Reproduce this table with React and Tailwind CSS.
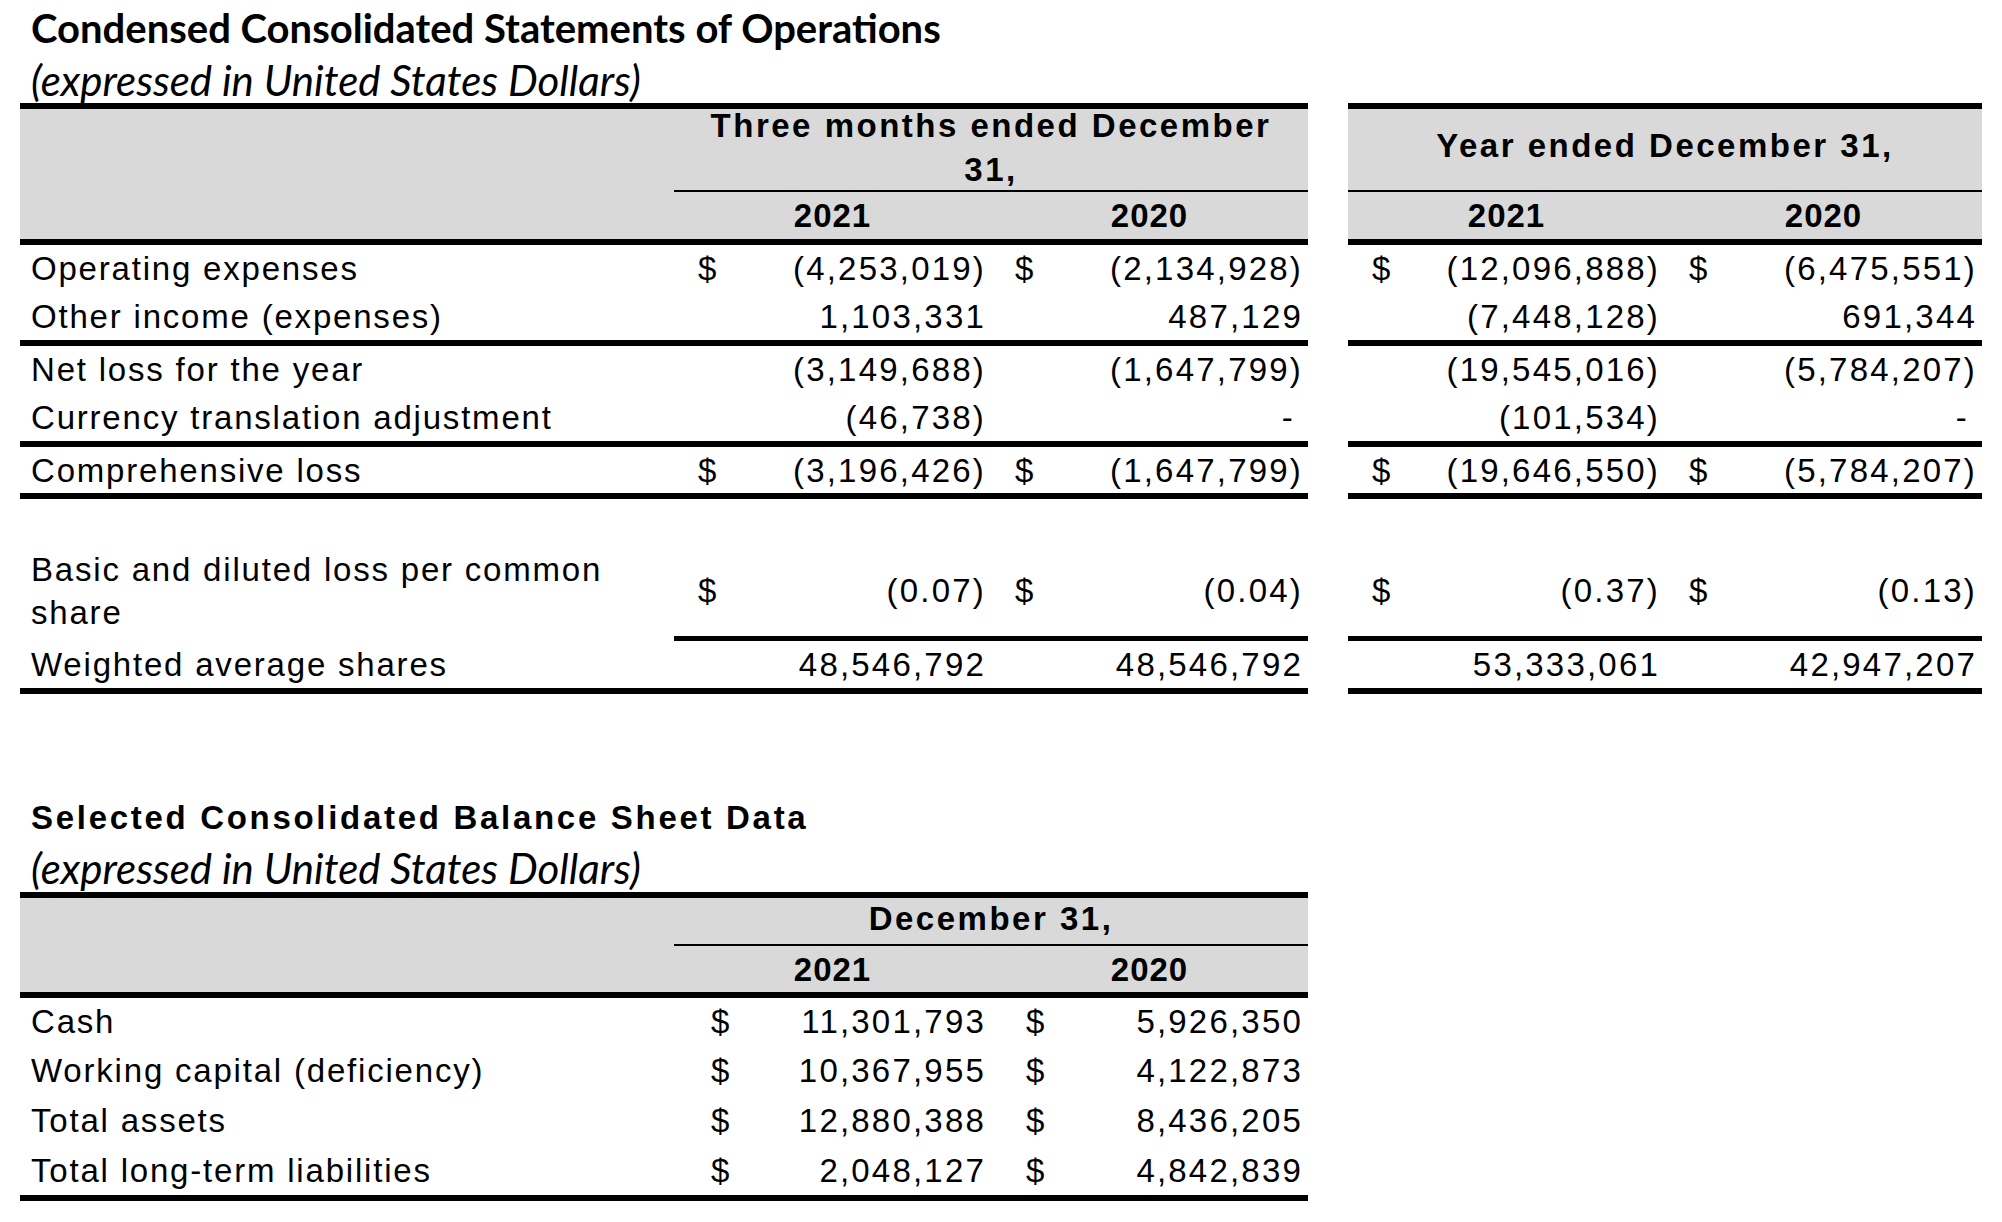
import React from "react";

const ARIAL = "font-['Liberation_Sans',Arial,sans-serif]";
const CAL = "font-['Lato','Liberation_Sans',sans-serif]";

function Line({ h = "h-[6px]" }) {
  return <div className={`${h} bg-black`} />;
}

function Money({ d, v, dash, pl = "pl-[24px]" }) {
  return (
    <div className={`flex items-center justify-between ${pl} ${dash ? "pr-[13px]" : "pr-[5px]"}`}>
      <span>{d ? "$" : ""}</span>
      <span className="tracking-[2.2px]">{v}</span>
    </div>
  );
}

function LeftRow({ h, label, a, b }) {
  return (
    <div className={`grid grid-cols-[654px_317px_317px] items-center ${h}`}>
      <div className="pl-[11px]">{label}</div>
      <Money {...a} />
      <Money {...b} />
    </div>
  );
}

function RightRow({ h, a, b }) {
  return (
    <div className={`grid grid-cols-[317px_317px] items-center ${h}`}>
      <Money {...a} />
      <Money {...b} />
    </div>
  );
}

const ops = [
  { h: "h-[47px]", label: "Operating expenses", a: { d: 1, v: "(4,253,019)" }, b: { d: 1, v: "(2,134,928)" }, c: { d: 1, v: "(12,096,888)" }, e: { d: 1, v: "(6,475,551)" } },
  { h: "h-[48px]", label: "Other income (expenses)", a: { v: "1,103,331" }, b: { v: "487,129" }, c: { v: "(7,448,128)" }, e: { v: "691,344" } },
  "line",
  { h: "h-[47px]", label: "Net loss for the year", a: { v: "(3,149,688)" }, b: { v: "(1,647,799)" }, c: { v: "(19,545,016)" }, e: { v: "(5,784,207)" } },
  { h: "h-[48px]", label: "Currency translation adjustment", a: { v: "(46,738)" }, b: { v: "-", dash: 1 }, c: { v: "(101,534)" }, e: { v: "-", dash: 1 } },
  "line",
  { h: "h-[46px]", label: "Comprehensive loss", a: { d: 1, v: "(3,196,426)" }, b: { d: 1, v: "(1,647,799)" }, c: { d: 1, v: "(19,646,550)" }, e: { d: 1, v: "(5,784,207)" } },
  "line",
];

function LeftTable() {
  return (
    <div className="w-[1288px] shrink-0">
      <Line />
      <div className="bg-[#d9d9d9] h-[130px] flex flex-col">
        <div className="flex h-[81px]">
          <div className="w-[654px]" />
          <div className="w-[634px] flex items-center justify-center text-center font-bold tracking-[2.5px] leading-[44px] -mt-[4px]">
            <div>
              Three months ended December
              <br />
              31,
            </div>
          </div>
        </div>
        <div className="flex">
          <div className="w-[654px]" />
          <div className="w-[634px] h-[2px] bg-black" />
        </div>
        <div className="grid grid-cols-[654px_317px_317px] h-[47px] items-center font-bold tracking-[1px]">
          <div />
          <div className="text-center">2021</div>
          <div className="text-center">2020</div>
        </div>
      </div>
      <Line />
      {ops.map((r, i) =>
        r === "line" ? <Line key={i} /> : <LeftRow key={i} h={r.h} label={r.label} a={r.a} b={r.b} />
      )}
      <div className="h-[46px]" />
      <div className="grid grid-cols-[654px_317px_317px] items-center h-[91px]">
        <div className="pl-[11px] leading-[43px]">
          Basic and diluted loss per common
          <br />
          share
        </div>
        <Money d={1} v="(0.07)" />
        <Money d={1} v="(0.04)" />
      </div>
      <div className="flex">
        <div className="w-[654px]" />
        <div className="w-[634px] h-[5px] bg-black" />
      </div>
      <LeftRow h="h-[47px]" label="Weighted average shares" a={{ v: "48,546,792" }} b={{ v: "48,546,792" }} />
      <Line />
    </div>
  );
}

function RightTable() {
  return (
    <div className="w-[634px] shrink-0">
      <Line />
      <div className="bg-[#d9d9d9] h-[130px] flex flex-col">
        <div className="h-[81px] flex items-center justify-center font-bold tracking-[2.5px] pb-[9px]">
          Year ended December 31,
        </div>
        <div className="h-[2px] bg-black" />
        <div className="grid grid-cols-[317px_317px] h-[47px] items-center font-bold tracking-[1px]">
          <div className="text-center">2021</div>
          <div className="text-center">2020</div>
        </div>
      </div>
      <Line />
      {ops.map((r, i) =>
        r === "line" ? <Line key={i} /> : <RightRow key={i} h={r.h} a={r.c} b={r.e} />
      )}
      <div className="h-[46px]" />
      <div className="grid grid-cols-[317px_317px] items-center h-[91px]">
        <Money d={1} v="(0.37)" />
        <Money d={1} v="(0.13)" />
      </div>
      <div className="h-[5px] bg-black" />
      <RightRow h="h-[47px]" a={{ v: "53,333,061" }} b={{ v: "42,947,207" }} />
      <Line />
    </div>
  );
}

const bal = [
  { h: "h-[47px]", label: "Cash", a: "11,301,793", b: "5,926,350" },
  { h: "h-[50px]", label: "Working capital (deficiency)", a: "10,367,955", b: "4,122,873" },
  { h: "h-[50px]", label: "Total assets", a: "12,880,388", b: "8,436,205" },
  { h: "h-[50px]", label: "Total long-term liabilities", a: "2,048,127", b: "4,842,839" },
];

function BalanceTable() {
  return (
    <div className="w-[1288px]">
      <Line />
      <div className="bg-[#d9d9d9] flex flex-col">
        <div className="flex h-[46px]">
          <div className="w-[654px]" />
          <div className="w-[634px] flex items-center justify-center font-bold tracking-[2.5px] pb-[6px]">
            December 31,
          </div>
        </div>
        <div className="flex">
          <div className="w-[654px]" />
          <div className="w-[634px] h-[2px] bg-black" />
        </div>
        <div className="grid grid-cols-[654px_317px_317px] h-[46px] items-center font-bold tracking-[1px]">
          <div />
          <div className="text-center">2021</div>
          <div className="text-center">2020</div>
        </div>
      </div>
      <Line />
      {bal.map((r, i) => (
        <div key={i} className={`grid grid-cols-[654px_317px_317px] items-center ${r.h}`}>
          <div className="pl-[11px]">{r.label}</div>
          <Money d={1} v={r.a} pl="pl-[37px]" />
          <Money d={1} v={r.b} pl="pl-[35px]" />
        </div>
      ))}
      <Line />
    </div>
  );
}

export default function App() {
  return (
    <div className={`w-[2002px] h-[1222px] bg-white text-black overflow-hidden ${ARIAL} text-[33px] tracking-[1.8px] leading-none`}>
      <div className="pl-[20px]">
        <div className={`h-[56px] flex items-center pl-[11px] ${CAL} font-bold text-[40px] tracking-normal`}>
          Condensed Consolidated Statements of Operations
        </div>
        <div className={`h-[47px] flex items-center pl-[11px] ${CAL} italic text-[42px] tracking-normal`}>
          (expressed in United States Dollars)
        </div>
        <div className="flex gap-[40px]">
          <LeftTable />
          <RightTable />
        </div>
        <div className="h-[96px]" />
        <div className="h-[54px] flex items-center pl-[11px] font-bold tracking-[2.7px]">
          Selected Consolidated Balance Sheet Data
        </div>
        <div className={`h-[48px] flex items-center pl-[11px] ${CAL} italic text-[42px] tracking-normal`}>
          (expressed in United States Dollars)
        </div>
        <BalanceTable />
      </div>
    </div>
  );
}
